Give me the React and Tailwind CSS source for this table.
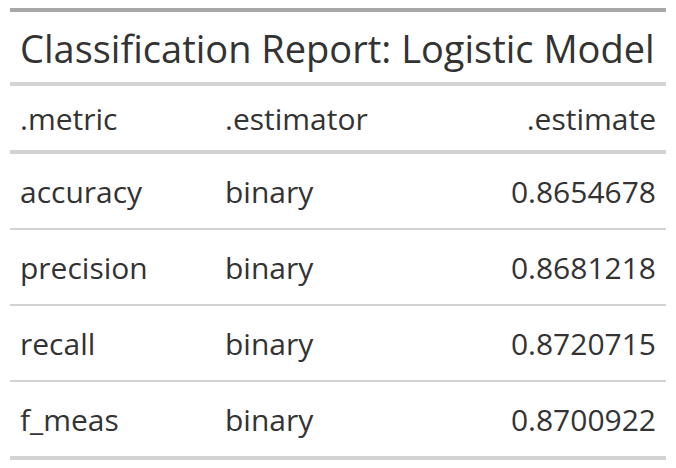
const rows = [
  { metric: 'accuracy', estimator: 'binary', estimate: '0.8654678' },
  { metric: 'precision', estimator: 'binary', estimate: '0.8681218' },
  { metric: 'recall', estimator: 'binary', estimate: '0.8720715' },
  { metric: 'f_meas', estimator: 'binary', estimate: '0.8700922' },
];

export default function App() {
  return (
    <div className="min-h-screen bg-white px-[10px] pt-[8px] font-['Segoe_UI','Open_Sans',sans-serif] text-[#333333]">
      <div className="w-[656px] border-t-4 border-b-4 border-t-[#a8a8a8] border-b-[#d3d3d3]">
        <div className="flex h-[74px] items-center border-b-4 border-[#d3d3d3] px-[10px] pt-[2px] text-[38px] leading-none">
          Classification Report: Logistic Model
        </div>
        <div className="flex h-[68px] items-center border-b-4 border-[#d3d3d3] text-[30px]">
          <div className="w-[205px] px-[10px]">.metric</div>
          <div className="w-[220px] px-[10px]">.estimator</div>
          <div className="flex-1 px-[10px] text-right">.estimate</div>
        </div>
        {rows.map((r, i) => (
          <div
            key={r.metric}
            className={
              i < rows.length - 1
                ? 'flex h-[76px] items-center border-b-2 border-[#d3d3d3] text-[30px]'
                : 'flex h-[74px] items-center text-[30px]'
            }
          >
            <div className="w-[205px] px-[10px]">{r.metric}</div>
            <div className="w-[220px] px-[10px]">{r.estimator}</div>
            <div className="flex-1 px-[10px] text-right">{r.estimate}</div>
          </div>
        ))}
      </div>
    </div>
  );
}
